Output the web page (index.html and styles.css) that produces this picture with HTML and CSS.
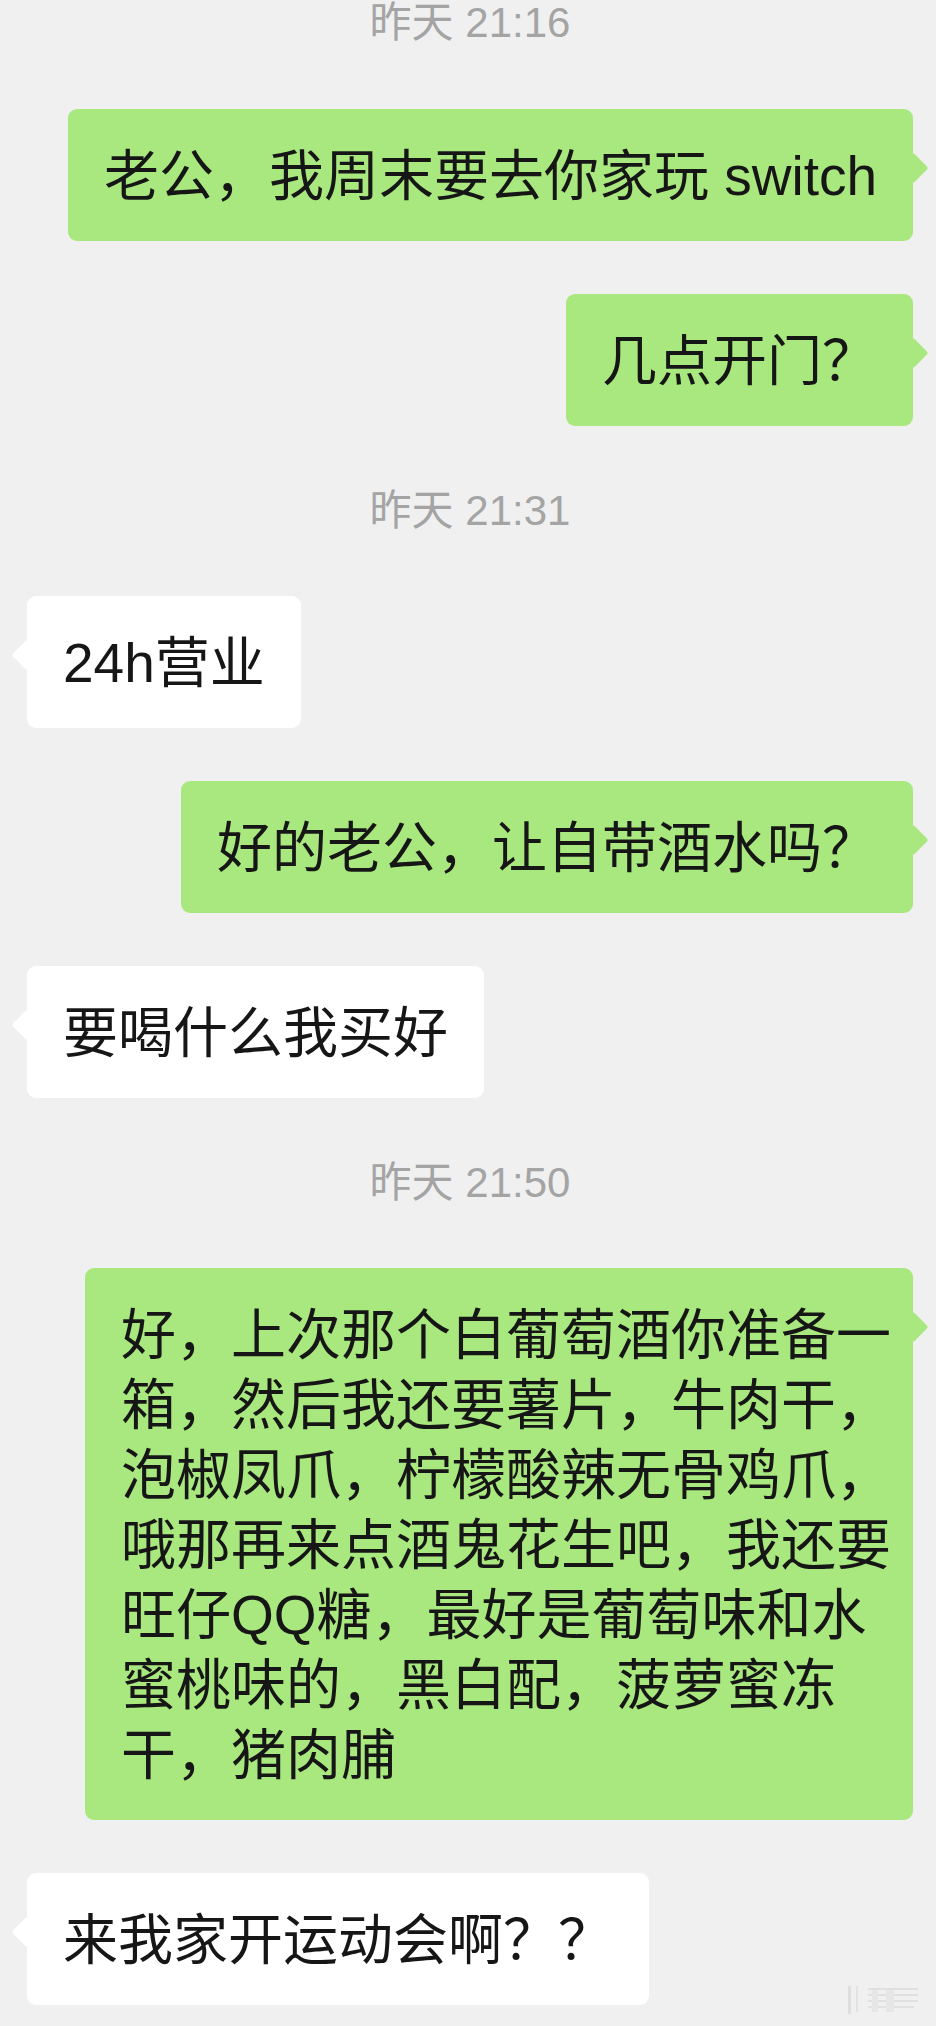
FILE: index.html
```html
<!DOCTYPE html>
<html lang="zh-CN">
<head>
  <meta charset="UTF-8">
  <title>聊天记录</title>
  <link rel="stylesheet" href="styles.css">
</head>
<body>
  <div class="chat">
    <div class="time">昨天 21:16</div>

    <div class="row mine">
      <div class="bubble">老公，我周末要去你家玩 switch</div>
    </div>

    <div class="row mine">
      <div class="bubble">几点开门？</div>
    </div>

    <div class="time">昨天 21:31</div>

    <div class="row theirs">
      <div class="bubble">24h营业</div>
    </div>

    <div class="row mine">
      <div class="bubble">好的老公，让自带酒水吗？</div>
    </div>

    <div class="row theirs">
      <div class="bubble">要喝什么我买好</div>
    </div>

    <div class="time">昨天 21:50</div>

    <div class="row mine">
      <div class="bubble long">好，上次那个白葡萄酒你准备一箱，然后我还要薯片，牛肉干，泡椒凤爪，柠檬酸辣无骨鸡爪，哦那再来点酒鬼花生吧，我还要旺仔QQ糖，最好是葡萄味和水蜜桃味的，黑白配，菠萝蜜冻干，猪肉脯</div>
    </div>

    <div class="row theirs">
      <div class="bubble">来我家开运动会啊？？</div>
    </div>
  </div>

  <!-- faint watermark in the corner -->
  <svg class="mark" width="80" height="40" viewBox="0 0 80 40">
    <rect x="2" y="6" width="3" height="28" fill="#dedede"/>
    <rect x="10" y="6" width="2" height="26" fill="#e2e2e2"/>
    <rect x="22" y="8" width="50" height="2" fill="#e0e0e0"/>
    <rect x="22" y="14" width="50" height="2" fill="#e0e0e0"/>
    <rect x="22" y="20" width="50" height="2" fill="#e0e0e0"/>
    <rect x="22" y="26" width="46" height="2" fill="#e2e2e2"/>
    <rect x="26" y="10" width="6" height="22" fill="#e6e6e6"/>
    <rect x="40" y="10" width="8" height="22" fill="#e6e6e6"/>
  </svg>
</body>
</html>
```

FILE: styles.css
```css
html {
  background: #f0f0f0;
}

body {
  margin: 0;
  min-height: 2026px;
  position: relative;
  font-family: "Liberation Sans", "Noto Sans CJK SC", sans-serif;
  color: #161616;
}

.chat {
  display: flex;
  flex-direction: column;
  gap: 53px;
  padding: 3px 23px 0 27px;
}

.time {
  margin: 12px 0;
  font-size: 42px;
  line-height: 40px;
  text-align: center;
  color: #a4a4a4;
}

.time:first-child {
  margin-top: 0;
  margin-bottom: 13px;
}

.row {
  display: flex;
}

.row.mine {
  justify-content: flex-end;
}

.bubble {
  position: relative;
  box-sizing: border-box;
  max-width: 860px;
  padding: 32px 36px 30px;
  border-radius: 9px;
  font-size: 55px;
  line-height: 70px;
  background: #fff;
}

.mine .bubble {
  background: #a9e77f;
}

.bubble::after {
  content: "";
  position: absolute;
  top: 48px;
  width: 22px;
  height: 22px;
  border-radius: 3px;
  background: inherit;
  transform: rotate(45deg);
}

.mine .bubble::after {
  right: -11px;
}

.theirs .bubble::after {
  left: -11px;
}

.bubble.long {
  max-width: 828px;
  padding-right: 21px;
}

.mark {
  position: absolute;
  right: 10px;
  bottom: 6px;
}
```
